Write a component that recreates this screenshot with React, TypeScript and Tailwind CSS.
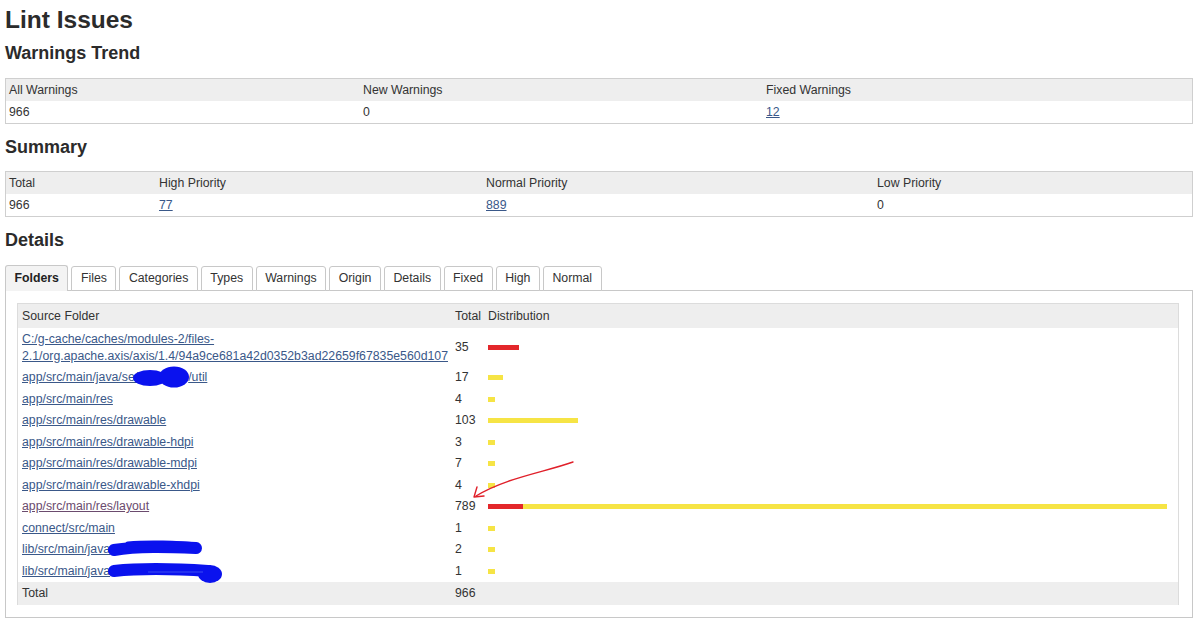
import React from "react";

type Row = {
  path: React.ReactNode;
  total: number;
  red: number;
  yellow: number;
  visited?: boolean;
};

const linkCls = "text-[#3a5889] underline";

function Blob({ w, children }: { w: number; children: React.ReactNode }) {
  return (
    <span className="relative inline-block h-[12px] align-middle" style={{ width: w }}>
      {children}
    </span>
  );
}

const rows: Row[] = [
  {
    path: (
      <>
        C:/g-cache/caches/modules-2/files-
        <br />
        2.1/org.apache.axis/axis/1.4/94a9ce681a42d0352b3ad22659f67835e560d107
      </>
    ),
    total: 35,
    red: 31,
    yellow: 0,
  },
  {
    path: (
      <>
        app/src/main/java/se/
        <Blob w={50}>
          <svg className="absolute -left-[4px] -top-[5px] overflow-visible" width="66" height="24">
            <ellipse cx="16" cy="11" rx="17" ry="8" fill="#0a12ee" />
            <ellipse cx="40" cy="10" rx="15" ry="10.5" fill="#0a12ee" />
          </svg>
        </Blob>
        /util
      </>
    ),
    total: 17,
    red: 0,
    yellow: 15,
  },
  { path: "app/src/main/res", total: 4, red: 0, yellow: 7 },
  { path: "app/src/main/res/drawable", total: 103, red: 0, yellow: 90 },
  { path: "app/src/main/res/drawable-hdpi", total: 3, red: 0, yellow: 7 },
  { path: "app/src/main/res/drawable-mdpi", total: 7, red: 0, yellow: 7 },
  { path: "app/src/main/res/drawable-xhdpi", total: 4, red: 0, yellow: 7 },
  { path: "app/src/main/res/layout", total: 789, red: 35, yellow: 644, visited: true },
  { path: "connect/src/main", total: 1, red: 0, yellow: 7 },
  {
    path: (
      <>
        lib/src/main/java
        <Blob w={90}>
          <svg className="absolute -left-[2px] -top-[6px] overflow-visible" width="100" height="24">
            <path d="M6 12 C 30 8, 60 9, 88 10" stroke="#0a12ee" strokeWidth="12" strokeLinecap="round" fill="none" />
            <path d="M20 6 C 40 4, 70 5, 88 7" stroke="#0a12ee" strokeWidth="5" strokeLinecap="round" fill="none" />
          </svg>
        </Blob>
      </>
    ),
    total: 2,
    red: 0,
    yellow: 7,
  },
  {
    path: (
      <>
        lib/src/main/java
        <Blob w={110}>
          <svg className="absolute -left-[2px] -top-[6px] overflow-visible" width="120" height="30">
            <path d="M6 11 C 35 8, 70 9, 100 11" stroke="#0a12ee" strokeWidth="12" strokeLinecap="round" fill="none" />
            <ellipse cx="102" cy="14" rx="12" ry="9" fill="#0a12ee" />
            <path d="M40 12 L 95 12" stroke="#3b4cf0" strokeWidth="1" />
          </svg>
        </Blob>
      </>
    ),
    total: 1,
    red: 0,
    yellow: 7,
  },
];

const tabs = ["Folders", "Files", "Categories", "Types", "Warnings", "Origin", "Details", "Fixed", "High", "Normal"];

export default function App() {
  return (
    <div className="relative min-h-[624px] w-[1200px] overflow-hidden bg-white px-[5px] font-['Liberation_Sans',Arial,sans-serif] text-[12.3px] text-[#333]">
      <h1 className="pt-[5px] text-[24.5px] font-bold leading-[30px] text-[#2b2b2b]">Lint Issues</h1>

      <h2 className="mt-[6px] text-[18px] font-bold leading-[24px] text-[#2b2b2b]">Warnings Trend</h2>
      <div className="mt-[13px] w-[1188px] border border-[#cfcfcf]">
        <div className="grid h-[22px] grid-cols-[354px_403px_1fr] items-center bg-[#eeeeee]">
          <div className="pl-[3px]">All Warnings</div>
          <div className="pl-[3px]">New Warnings</div>
          <div className="pl-[3px]">Fixed Warnings</div>
        </div>
        <div className="grid h-[22px] grid-cols-[354px_403px_1fr] items-center">
          <div className="pl-[3px]">966</div>
          <div className="pl-[3px]">0</div>
          <div className="pl-[3px]">
            <a className={linkCls}>12</a>
          </div>
        </div>
      </div>

      <h2 className="mt-[11px] text-[18px] font-bold leading-[24px] text-[#2b2b2b]">Summary</h2>
      <div className="mt-[12px] w-[1188px] border border-[#cfcfcf]">
        <div className="grid h-[22px] grid-cols-[150px_327px_391px_1fr] items-center bg-[#eeeeee]">
          <div className="pl-[3px]">Total</div>
          <div className="pl-[3px]">High Priority</div>
          <div className="pl-[3px]">Normal Priority</div>
          <div className="pl-[3px]">Low Priority</div>
        </div>
        <div className="grid h-[22px] grid-cols-[150px_327px_391px_1fr] items-center">
          <div className="pl-[3px]">966</div>
          <div className="pl-[3px]">
            <a className={linkCls}>77</a>
          </div>
          <div className="pl-[3px]">
            <a className={linkCls}>889</a>
          </div>
          <div className="pl-[3px]">0</div>
        </div>
      </div>

      <h2 className="mt-[11px] text-[18px] font-bold leading-[24px] text-[#2b2b2b]">Details</h2>

      <div className="mt-[13px] w-[1188px]">
        <div className="relative z-10 -mb-px flex gap-[3px]">
          {tabs.map((t, i) => (
            <div
              key={t}
              className={
                i === 0
                  ? "flex h-[26px] items-center rounded-t-[3px] border border-b-0 border-[#c8c8c8] bg-[#f3f3f3] px-[8.5px] font-bold text-[#222]"
                  : "mt-px flex h-[25px] items-center self-start rounded-t-[3px] border border-[#c8c8c8] bg-white px-[8.5px]"
              }
            >
              {t}
            </div>
          ))}
        </div>
        <div className="border border-[#c8c8c8] bg-white px-[11px] pb-[12px] pt-[12px]">
          <div className="w-[1162px] border border-b-0 border-[#dcdcdc]">
            <div className="grid h-[24px] grid-cols-[435px_32px_1fr] items-center bg-[#eeeeee]">
              <div className="pl-[4px]">Source Folder</div>
              <div className="pl-[2px]">Total</div>
              <div className="pl-[3px]">Distribution</div>
            </div>
            {rows.map((r, i) => (
              <div
                key={i}
                className={
                  i === 0
                    ? "grid grid-cols-[435px_32px_1fr] items-center py-[2.5px] leading-[17px]"
                    : "grid h-[21.5px] grid-cols-[435px_32px_1fr] items-center leading-[17px]"
                }
              >
                <div className="whitespace-nowrap pl-[4px]">
                  <a className={r.visited ? "text-[#6b4b6e] underline" : linkCls}>{r.path}</a>
                </div>
                <div className="pl-[2px]">{r.total}</div>
                <div className="flex items-center pl-[3px]">
                  {r.red > 0 && <span className="h-[5px] bg-[#e3272b]" style={{ width: r.red }} />}
                  {r.yellow > 0 && <span className="h-[5px] bg-[#f6e445]" style={{ width: r.yellow }} />}
                </div>
              </div>
            ))}
            <div className="grid h-[23px] grid-cols-[435px_32px_1fr] items-center bg-[#eeeeee]">
              <div className="pl-[4px]">Total</div>
              <div className="pl-[2px]">966</div>
              <div />
            </div>
          </div>
        </div>
      </div>

      {/* hand-drawn annotation arrow */}
      <svg className="pointer-events-none absolute left-0 top-0" width="1200" height="624">
        <path d="M573 462 C 545 472, 505 478, 476 496" stroke="#e0202a" strokeWidth="1.4" fill="none" strokeLinecap="round" />
        <path d="M477 487 L 474 497 L 484 496" stroke="#e0202a" strokeWidth="1.4" fill="none" strokeLinecap="round" strokeLinejoin="round" />
      </svg>
    </div>
  );
}
